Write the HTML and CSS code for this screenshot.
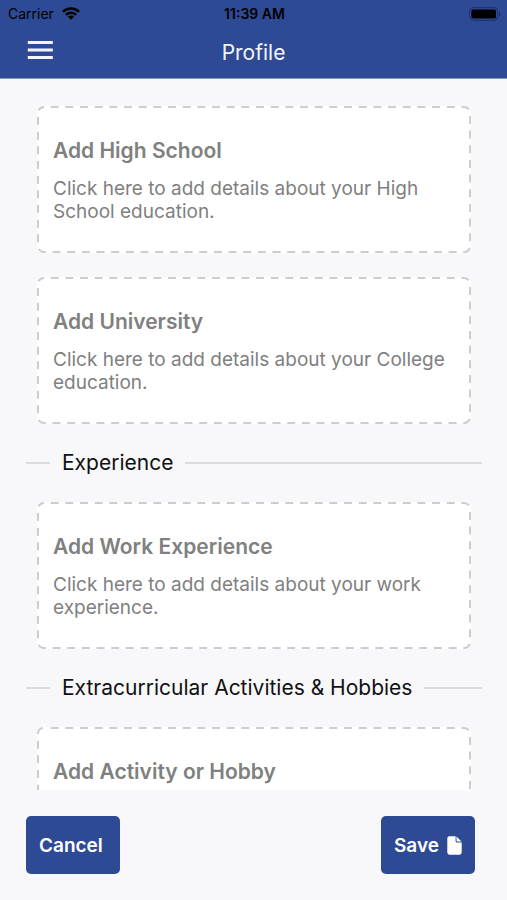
FILE: index.html
```html
<!DOCTYPE html>
<html lang="en">
<head>
<meta charset="utf-8">
<meta name="viewport" content="width=device-width, initial-scale=1">
<title>Profile</title>
<link rel="stylesheet" href="styles.css">
</head>
<body>
<header class="header">
  <div class="status">
    <span class="carrier">Carrier
      <svg class="wifi" viewBox="0 0 18 13" aria-hidden="true"><g fill="none" stroke="#000" stroke-width="2.5"><path d="M1 4.8A11.4 11.4 0 0 1 17 4.8"/><path d="M3.9 7.8A7.3 7.3 0 0 1 14.1 7.8"/></g><path d="M9 12.8L5.9 9.7a4.4 4.4 0 0 1 6.2 0z"/></svg>
    </span>
    <time class="clock">11:39 AM</time>
    <svg class="battery" viewBox="0 0 32 14" aria-hidden="true"><rect x=".7" y=".7" width="28" height="12.6" rx="3.6" fill="none" stroke="#1c2f66" stroke-width="1"/><rect x="2.4" y="2.4" width="24.6" height="9.2" rx="1.8"/><path d="M30 4.8q1.6.7 1.6 2.2T30 9.2z" fill="#1c2f66"/></svg>
  </div>
  <div class="nav">
    <button class="menu" type="button" aria-label="Menu"><svg class="bars" viewBox="0 0 26 20" aria-hidden="true"><path d="M.8 2.5h25M.8 10h25M.8 17.5h25" stroke="#f2f5ff" stroke-width="2.8"/></svg></button>
    <h1 class="title">Profile</h1>
  </div>
</header>
<main class="content">
  <button class="card" type="button">
    <svg class="outline" aria-hidden="true"><rect class="dash" x="1" y="1" rx="6"/></svg>
    <span class="card-title">Add High School</span>
    <span class="card-text">Click here to add details about your High School education.</span>
  </button>
  <button class="card" type="button">
    <svg class="outline" aria-hidden="true"><rect class="dash" x="1" y="1" rx="6"/></svg>
    <span class="card-title">Add University</span>
    <span class="card-text">Click here to add details about your College education.</span>
  </button>
  <h2 class="section">Experience</h2>
  <button class="card" type="button">
    <svg class="outline" aria-hidden="true"><rect class="dash" x="1" y="1" rx="6"/></svg>
    <span class="card-title">Add Work Experience</span>
    <span class="card-text">Click here to add details about your work experience.</span>
  </button>
  <h2 class="section">Extracurricular Activities &amp; Hobbies</h2>
  <button class="card card-short" type="button">
    <svg class="outline" aria-hidden="true"><rect class="dash" x="1" y="1" rx="6"/></svg>
    <span class="card-title">Add Activity or Hobby</span>
  </button>
</main>
<footer class="footer">
  <button class="action" type="button">Cancel</button>
  <button class="action" type="button">Save
    <svg class="file" viewBox="0 0 15 19" aria-hidden="true"><path fill="#fff" d="M2.4.3h6.2v4.6q0 1.5 1.5 1.5h4.6v10.2q0 2.1-2.1 2.1H2.4q-2.1 0-2.1-2.1V2.4Q.3.3 2.4.3z"/><path fill="#fff" d="M9.5.5l5 5h-4q-1 0-1-1z"/></svg>
  </button>
</footer>
</body>
</html>
```
FILE: styles.css
```css
* { box-sizing: border-box; }

body {
  margin: 0;
  height: 100vh;
  display: flex;
  flex-direction: column;
  overflow: hidden;
  background: #f8f8fb;
  font-family: Inter, "Liberation Sans", sans-serif;
}

button {
  font: inherit;
  border: 0;
  cursor: pointer;
}

.header {
  flex: none;
  background: #2f4a94;
  border-bottom: 1px solid #8797c0;
}

.status {
  display: grid;
  grid-template-columns: 1fr auto 1fr;
  align-items: center;
  height: 27px;
  padding: 0 6px 0 8px;
  font-size: 14px;
  color: #000;
}

.carrier {
  display: flex;
  align-items: center;
  gap: 8px;
}

.wifi { width: 18px; height: 13px; }

.clock { font-weight: 600; }

.battery {
  width: 32px;
  height: 14px;
  justify-self: end;
}

.nav {
  display: grid;
  grid-template-columns: 1fr auto 1fr;
  align-items: center;
  height: 51px;
  padding: 0 27px;
}

.menu {
  display: flex;
  justify-self: start;
  padding: 0 0 6px;
  background: none;
}

.bars { width: 26px; height: 20px; }

.title {
  margin: 0;
  font-size: 21px;
  font-weight: 400;
  line-height: 48px;
  color: #f2f5ff;
}

.content {
  flex: 1;
  min-height: 0;
  overflow: hidden;
  padding: 27px 25px 0 26px;
}

.card {
  position: relative;
  display: block;
  width: calc(100% - 22px);
  margin: 0 11px 24px;
  padding: 30px 16px;
  border-radius: 7px;
  background: #fff;
  text-align: left;
  color: #808080;
}

.card-short { padding-bottom: 48px; }

.outline {
  position: absolute;
  inset: 0;
  width: 100%;
  height: 100%;
}

.dash {
  width: calc(100% - 2px);
  height: calc(100% - 2px);
  fill: none;
  stroke: #cdcdcd;
  stroke-width: 2px;
  stroke-dasharray: 8 6.67;
  stroke-dashoffset: 8;
}

.card-title {
  display: block;
  margin-bottom: 11px;
  font-size: 21px;
  font-weight: 600;
  line-height: 30px;
}

.card-text {
  display: block;
  font-size: 19px;
  line-height: 23px;
}

.section {
  display: flex;
  align-items: center;
  gap: 12px;
  margin: 0 0 24px;
  font-size: 21px;
  font-weight: 400;
  line-height: 30px;
  color: #111;
}

.section::before,
.section::after {
  content: "";
  height: 2px;
  background: #dcdcde;
}

.section::before { width: 24px; }

.section::after { flex: 1; }

.footer {
  flex: none;
  display: flex;
  justify-content: space-between;
  padding: 26px 32px 26px 26px;
}

.action {
  display: flex;
  align-items: center;
  justify-content: space-between;
  width: 94px;
  height: 58px;
  padding: 0 13px;
  border-radius: 5px;
  background: #2f4a94;
  color: #fff;
  font-size: 19px;
  font-weight: 600;
}

.file { width: 15px; height: 19px; }
```
